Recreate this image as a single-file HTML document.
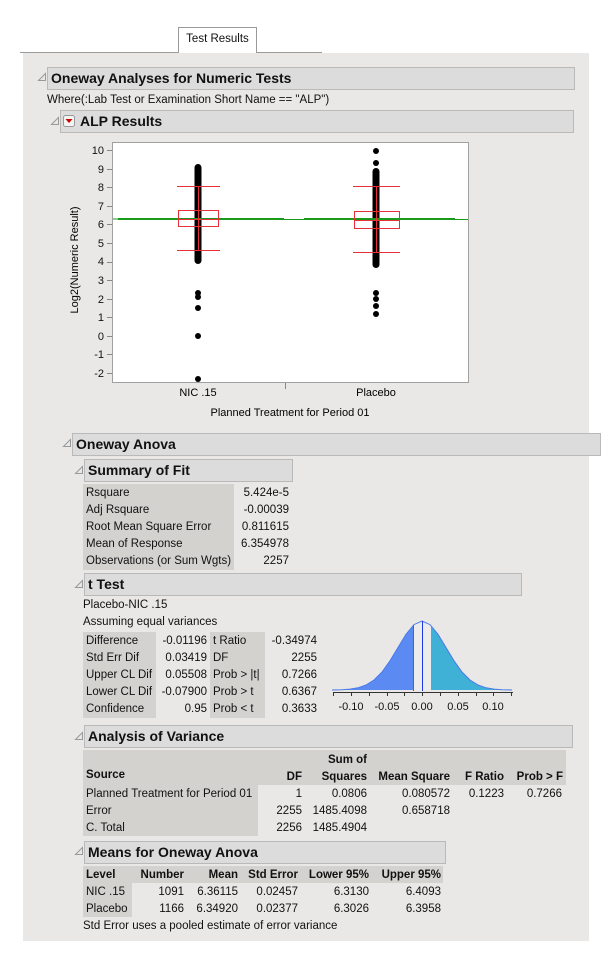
<!DOCTYPE html>
<html><head><meta charset="utf-8"><style>
body{margin:0;width:611px;height:960px;background:#fff;position:relative;overflow:hidden;font-family:"Liberation Sans",sans-serif;font-size:11px;color:#111}
.a{position:absolute;white-space:nowrap}
.bg{position:absolute;left:23px;top:53px;width:566px;height:888px;background:#e9e8e6}
.hd{position:absolute;background:#dcdcdc;border:1px solid #b9b9b9;font-weight:bold;font-size:14px;line-height:21px;padding-left:3px;box-sizing:border-box;height:23px}
.g{position:absolute;background:#d4d2cf}
.r{position:absolute;text-align:right;white-space:nowrap;line-height:17px}
</style></head><body>
<div class="a" style="left:20px;top:52px;width:302px;height:1px;background:#9a9a9a"></div>
<div class="a" style="left:178px;top:27px;width:79px;height:26px;background:#fff;border:1px solid #9a9a9a;border-bottom:none;box-sizing:border-box;text-align:center;line-height:22px;font-size:11.5px">Test Results</div>
<div class="bg"></div>

<svg class="a" style="left:0;top:0" width="611" height="960">
<g stroke="#999" fill="none" stroke-width="1">
<path d="M38.5 80.5 L45.5 73.5 L45.5 80.5Z"/><path d="M51.5 124.5 L58.5 117.5 L58.5 124.5Z"/>
<path d="M63.5 446.5 L70.5 439.5 L70.5 446.5Z"/><path d="M75.5 473.5 L82.5 466.5 L82.5 473.5Z"/>
<path d="M75.5 587.5 L82.5 580.5 L82.5 587.5Z"/><path d="M75.5 739.5 L82.5 732.5 L82.5 739.5Z"/>
<path d="M75.5 854.5 L82.5 847.5 L82.5 854.5Z"/>
</g></svg>

<div class="hd" style="left:47px;top:67px;width:528px">Oneway Analyses for Numeric Tests</div>
<div class="a" style="left:47px;top:94px;font-size:11.5px">Where(:Lab Test or Examination Short Name == "ALP")</div>
<div class="hd" style="left:60px;top:110px;width:514px;padding-left:19px">ALP Results</div>
<svg class="a" style="left:63px;top:115px" width="12" height="12"><rect x="0.5" y="0.5" width="11" height="11" rx="2" fill="#f4f4f4" stroke="#999"/><path d="M2.5 4 L9.5 4 L6 8Z" fill="#c00"/></svg>

<svg class="a" style="left:0;top:0" width="611" height="430">
<rect x="112.5" y="142.5" width="356" height="240" fill="#fff" stroke="#a0a0a0"/>
<g font-size="11" text-anchor="end" fill="#111" font-family="Liberation Sans">
<text x="104" y="154">10</text><text x="104" y="173">9</text><text x="104" y="191">8</text><text x="104" y="210">7</text><text x="104" y="228">6</text><text x="104" y="247">5</text><text x="104" y="265">4</text><text x="104" y="284">3</text><text x="104" y="303">2</text><text x="104" y="321">1</text><text x="104" y="340">0</text><text x="104" y="358">-1</text><text x="104" y="377">-2</text>
</g>
<g stroke="#888"><path d="M107 150.5h5M107 169.5h5M107 187.5h5M107 206.5h5M107 224.5h5M107 243.5h5M107 262.5h5M107 280.5h5M107 299.5h5M107 317.5h5M107 336.5h5M107 354.5h5M107 373.5h5M285.5 383v6"/></g>
<text x="0" y="0" transform="translate(78,260) rotate(-90)" text-anchor="middle" font-size="11" font-family="Liberation Sans">Log2(Numeric Result)</text>
<text x="198" y="396" text-anchor="middle" font-size="11" font-family="Liberation Sans">NIC .15</text>
<text x="376" y="396" text-anchor="middle" font-size="11" font-family="Liberation Sans">Placebo</text>
<text x="290" y="416" text-anchor="middle" font-size="11" font-family="Liberation Sans">Planned Treatment for Period 01</text>
<g fill="#000">
<rect x="194.5" y="164" width="7" height="100" rx="3.5"/>
<circle cx="198" cy="168" r="3"/><circle cx="198" cy="293" r="3"/><circle cx="198" cy="297" r="3"/><circle cx="198" cy="308" r="3"/><circle cx="198" cy="336" r="3"/><circle cx="198" cy="379" r="3"/>
<rect x="372.5" y="168" width="7" height="100" rx="3.5"/>
<circle cx="376" cy="151" r="3"/><circle cx="376" cy="163" r="3"/><circle cx="376" cy="293" r="3"/><circle cx="376" cy="299" r="3"/><circle cx="376" cy="306" r="3"/><circle cx="376" cy="314" r="3"/>
</g>
<g stroke="#1a9a1a" stroke-width="2"><path d="M118 219H284M304 219H455"/></g>
<g stroke="#1a9a1a" stroke-width="1"><path d="M113 219H118M284 219.5H304M455 219.5H468"/></g>
<g stroke="#e8303a" fill="none" stroke-width="1">
<path d="M177 186.5H220M177 250.5H220M198.5 186V250"/><rect x="178.5" y="210.5" width="40" height="16"/><path d="M178 219.5H219"/>
<path d="M353 186.5H400M353 252.5H400M376.5 186V252"/><rect x="354.5" y="211.5" width="45" height="17"/><path d="M354 220.5H399"/>
</g>
</svg>

<div class="hd" style="left:72px;top:433px;width:529px">Oneway Anova</div>
<div class="hd" style="left:84px;top:459px;width:209px">Summary of Fit</div>
<div class="g" style="left:83px;top:484px;width:151px;height:86px"></div>
<div class="a" style="left:86px;top:485px;line-height:17px;font-size:11.5px">Rsquare<br>Adj Rsquare<br>Root Mean Square Error<br>Mean of Response<br>Observations (or Sum Wgts)</div>
<div class="r" style="left:200px;width:89px;top:485px;font-size:11.5px">5.424e-5<br>-0.00039<br>0.811615<br>6.354978<br>2257</div>

<div class="hd" style="left:84px;top:573px;width:438px">t Test</div>
<div class="a" style="left:83px;top:599px;font-size:11.5px">Placebo-NIC .15</div>
<div class="a" style="left:83px;top:616px;font-size:11.5px">Assuming equal variances</div>
<div class="g" style="left:83px;top:632px;width:73px;height:86px"></div>
<div class="g" style="left:210px;top:632px;width:55px;height:86px"></div>
<div class="a" style="left:86px;top:633px;line-height:17px;font-size:11.5px">Difference<br>Std Err Dif<br>Upper CL Dif<br>Lower CL Dif<br>Confidence</div>
<div class="r" style="left:150px;width:57px;top:633px;font-size:11.5px">-0.01196<br>0.03419<br>0.05508<br>-0.07900<br>0.95</div>
<div class="a" style="left:213px;top:633px;line-height:17px;font-size:11.5px">t Ratio<br>DF<br>Prob &gt; |t|<br>Prob &gt; t<br>Prob &lt; t</div>
<div class="r" style="left:260px;width:57px;top:633px;font-size:11.5px">-0.34974<br>2255<br>0.7266<br>0.6367<br>0.3633</div>

<svg class="a" style="left:0;top:0" width="611" height="720">
<defs><clipPath id="c"><path d="M332 690 L342 689.7 L350 689.1 L358 687.8 L366 685 L374 680 L382 672 L390 660.8 L398 647.5 L406 634.3 L414 624.6 L422 621 L430 624.6 L438 634.3 L446 647.5 L454 660.8 L462 672 L470 680 L478 685 L486 687.8 L494 689.1 L502 689.7 L512 690Z"/></clipPath></defs>
<g clip-path="url(#c)"><rect x="330" y="615" width="84" height="80" fill="#5a8af2"/><rect x="413" y="615" width="18" height="80" fill="#ececec"/><rect x="431" y="615" width="85" height="80" fill="#3fb0d6"/></g>
<path d="M332 690 L342 689.7 L350 689.1 L358 687.8 L366 685 L374 680 L382 672 L390 660.8 L398 647.5 L406 634.3 L414 624.6 L422 621 L430 624.6 L438 634.3 L446 647.5 L454 660.8 L462 672 L470 680 L478 685 L486 687.8 L494 689.1 L502 689.7 L512 690" fill="none" stroke="#4a7ae8" stroke-width="1"/>
<path d="M413.5 625V691" stroke="#e03030"/><path d="M422.5 621V691" stroke="#1a3ae8"/>
<path d="M333 692.5H513M333.5 692v4M351.5 692v4M369.5 692v4M387.5 692v4M404.5 692v4M422.5 692v4M440.5 692v4M458.5 692v4M476.5 692v4M493.5 692v4M511.5 692v4" stroke="#333"/>
<g font-size="11" text-anchor="middle" font-family="Liberation Sans" fill="#111"><text x="351" y="710">-0.10</text><text x="387" y="710">-0.05</text><text x="422" y="710">0.00</text><text x="458" y="710">0.05</text><text x="493" y="710">0.10</text></g>
</svg>

<div class="hd" style="left:84px;top:725px;width:489px">Analysis of Variance</div>
<div class="g" style="left:83px;top:750px;width:483px;height:35px"></div>
<div class="g" style="left:83px;top:785px;width:175px;height:51px"></div>
<div style="position:absolute;left:0;top:0;font-size:11.5px">
<div class="a" style="left:86px;top:769px;font-weight:bold">Source</div>
<div class="r" style="left:250px;width:52px;top:769px;font-weight:bold">DF</div>
<div class="r" style="left:300px;width:67px;top:752px;font-weight:bold">Sum of<br>Squares</div>
<div class="r" style="left:370px;width:80px;top:769px;font-weight:bold">Mean Square</div>
<div class="r" style="left:450px;width:54px;top:769px;font-weight:bold">F Ratio</div>
<div class="r" style="left:505px;width:58px;top:769px;font-weight:bold">Prob &gt; F</div>
<div class="a" style="left:86px;top:786px;line-height:17px">Planned Treatment for Period 01<br>Error<br>C. Total</div>
<div class="r" style="left:250px;width:52px;top:786px">1<br>2255<br>2256</div>
<div class="r" style="left:300px;width:67px;top:786px">0.0806<br>1485.4098<br>1485.4904</div>
<div class="r" style="left:370px;width:80px;top:786px">0.080572<br>0.658718</div>
<div class="r" style="left:450px;width:54px;top:786px">0.1223</div>
<div class="r" style="left:505px;width:57px;top:786px">0.7266</div>
</div>

<div class="hd" style="left:84px;top:841px;width:362px">Means for Oneway Anova</div>
<div class="g" style="left:83px;top:866px;width:360px;height:17px"></div>
<div class="g" style="left:83px;top:883px;width:49px;height:34px"></div>
<div style="position:absolute;left:0;top:0;font-size:11.5px">
<div class="a" style="left:86px;top:867px;font-weight:bold;line-height:17px">Level</div>
<div class="a" style="left:86px;top:884px;line-height:17px">NIC .15<br>Placebo</div>
<div class="r" style="left:130px;width:54px;top:867px"><b>Number</b><br>1091<br>1166</div>
<div class="r" style="left:185px;width:53px;top:867px"><b>Mean</b><br>6.36115<br>6.34920</div>
<div class="r" style="left:240px;width:58px;top:867px"><b>Std Error</b><br>0.02457<br>0.02377</div>
<div class="r" style="left:300px;width:69px;top:867px"><b>Lower 95%</b><br>6.3130<br>6.3026</div>
<div class="r" style="left:370px;width:71px;top:867px"><b>Upper 95%</b><br>6.4093<br>6.3958</div>
<div class="a" style="left:83px;top:920px">Std Error uses a pooled estimate of error variance</div>
</div>
</body></html>
